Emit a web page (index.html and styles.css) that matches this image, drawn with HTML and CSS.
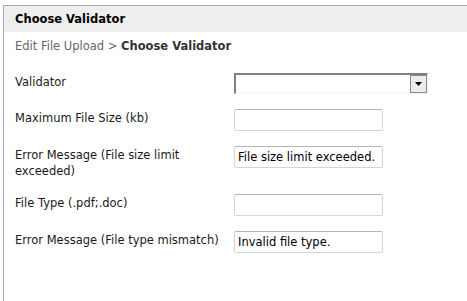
FILE: index.html
```html
<!DOCTYPE html>
<html lang="en">
<head>
    <meta charset="UTF-8">
    <meta name="viewport" content="width=device-width, initial-scale=1.0">
    <title>Choose Validator</title>
    <link rel="stylesheet" href="styles.css">
</head>
<body>
    <div class="panel">
        <div class="panel-head">Choose Validator</div>
        <div class="crumbs">Edit File Upload &gt; <b>Choose Validator</b></div>

        <form class="form">
            <label class="form-label" for="validator">Validator</label>
            <div class="combo">
                <select id="validator" name="validator"></select>
                <span class="combo-btn">
                    <svg width="7" height="4" viewBox="0 0 7 4"><path d="M0 0h7L3.5 4z" fill="#000"/></svg>
                </span>
            </div>

            <label class="form-label" for="maxSize">Maximum File Size (kb)</label>
            <input class="field" type="text" id="maxSize" name="maxSize">

            <label class="form-label" for="sizeMsg">Error Message (File size limit exceeded)</label>
            <input class="field" type="text" id="sizeMsg" name="sizeMsg" value="File size limit exceeded.">

            <label class="form-label" for="fileType">File Type (.pdf;.doc)</label>
            <input class="field" type="text" id="fileType" name="fileType">

            <label class="form-label" for="typeMsg">Error Message (File type mismatch)</label>
            <input class="field" type="text" id="typeMsg" name="typeMsg" value="Invalid file type.">
        </form>
    </div>
</body>
</html>
```

FILE: styles.css
```css
body {
    margin: 0;
    font-family: "DejaVu Sans", Verdana, sans-serif;
    font-size: 11.5px;
    color: #1a1a1a;
    background-color: #fff;
}

.panel {
    margin: 5px 0 0 3px;
    border-top: 1px solid #a8a8a8;
    border-left: 1px solid #a8a8a8;
    height: 300px;
    box-sizing: border-box;
}

.panel-head {
    height: 26px;
    line-height: 26px;
    padding-left: 11px;
    background-color: #eeeeee;
    font-weight: bold;
    color: #000;
}

.crumbs {
    padding: 6px 0 0 11px;
    line-height: 16px;
    color: #666;
}

.crumbs b {
    color: #333;
}

.form {
    display: grid;
    grid-template-columns: 219px 194px;
    row-gap: 15px;
    align-items: start;
    margin: 19px 0 0 11px;
}

.form-label {
    line-height: 16px;
    padding-top: 1px;
    padding-right: 8px;
}

.field {
    width: 149px;
    height: 22px;
    box-sizing: border-box;
    margin: 0;
    padding: 0 3px;
    border: 1px solid #d4d4d8;
    border-top-color: #b4b4b8;
    border-radius: 2px;
    font-family: "DejaVu Sans", Verdana, sans-serif;
    font-size: 11.5px;
    color: #000;
}

.combo {
    display: flex;
    width: 194px;
    height: 21px;
    box-sizing: border-box;
    border-top: 2px solid #808080;
    border-left: 2px solid #808080;
    border-right: 1px solid #f4f4f4;
    border-bottom: 1px solid #f4f4f4;
    background-color: #fff;
}

.combo select {
    flex: 1;
    appearance: none;
    border: none;
    background: transparent;
    margin: 0;
}

.combo-btn {
    display: flex;
    align-items: center;
    justify-content: center;
    width: 17px;
    height: 18px;
    box-sizing: border-box;
    border: 1px solid #8a8a8a;
    background-color: #ececec;
}
```
